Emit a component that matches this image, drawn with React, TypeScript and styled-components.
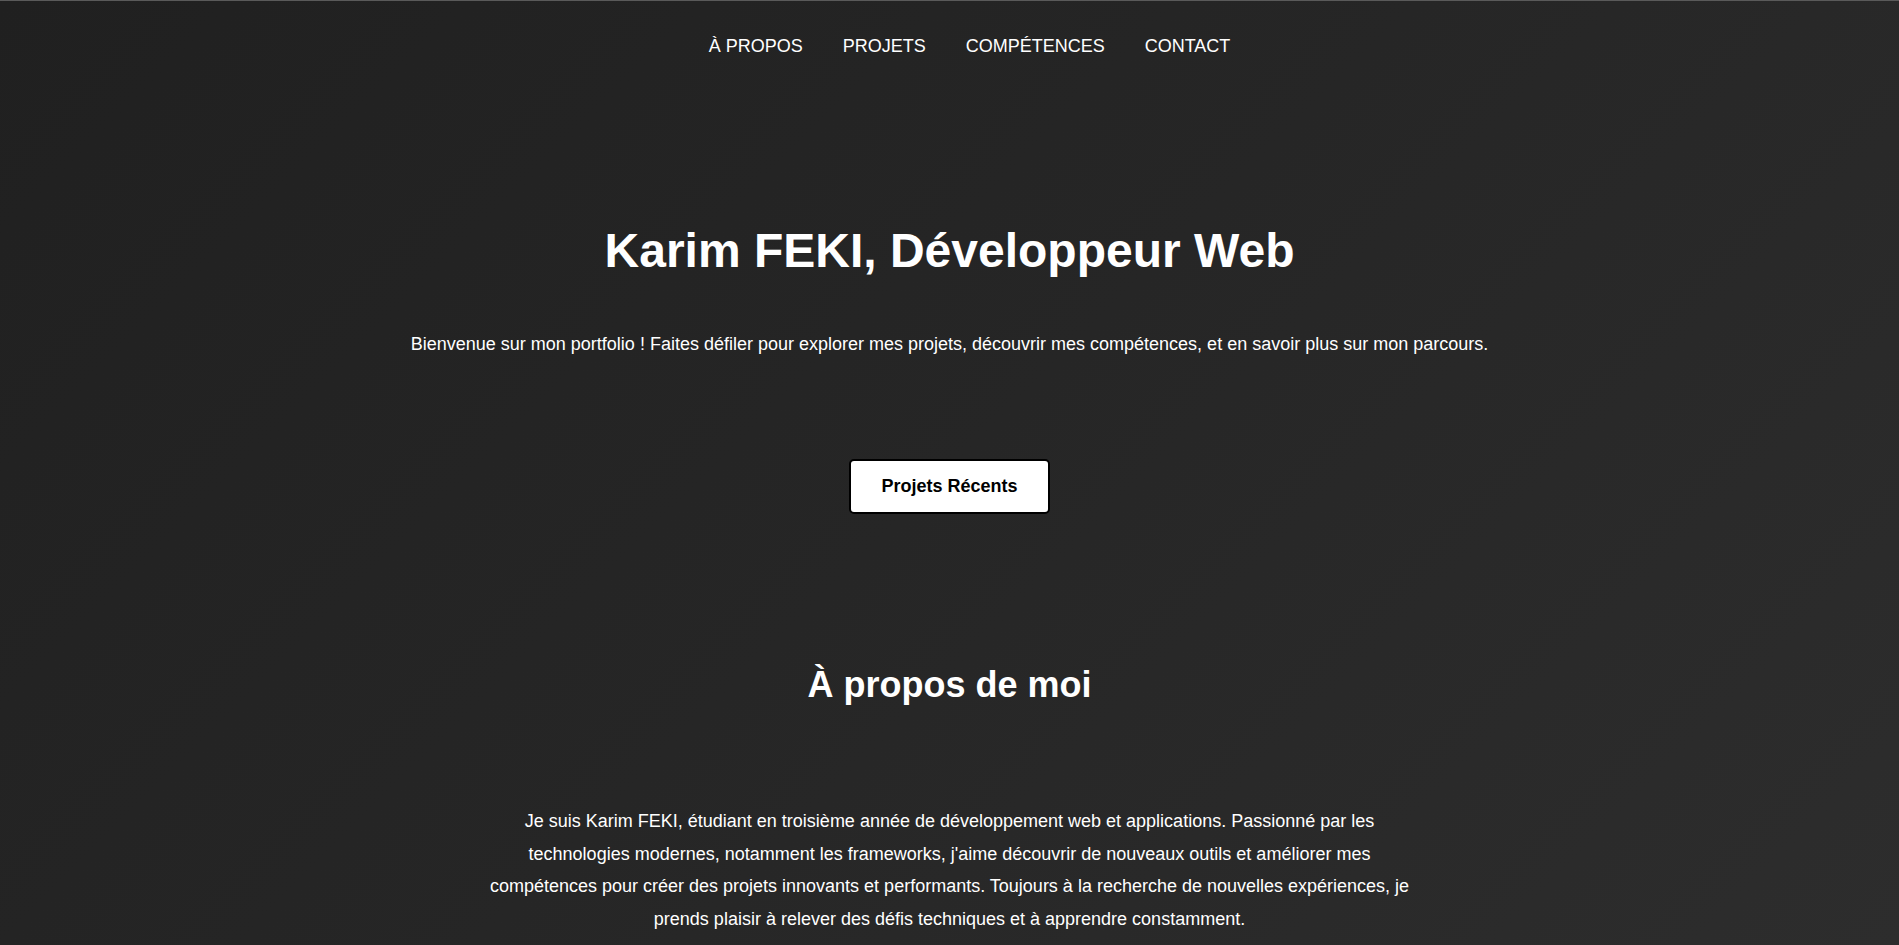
import React from "react";
import styled, { createGlobalStyle } from "styled-components";

const GlobalStyle = createGlobalStyle`
  html, body {
    margin: 0;
    padding: 0;
  }
  body {
    font-family: "Liberation Sans", Arial, sans-serif;
    color: #ffffff;
    background: linear-gradient(135deg, #202020 0%, #262626 50%, #2d2d2d 100%);
    min-height: 100vh;
  }
  * { box-sizing: border-box; }
`;

const Page = styled.div`
  min-height: 945px;
  border-top: 1px solid #5a5a5a;
  overflow: hidden;
`;

const Header = styled.header`
  display: flex;
  justify-content: center;
  padding-top: 35px;
`;

const Nav = styled.nav`
  display: flex;
  gap: 40px;
  padding-left: 40px;
`;

const NavLink = styled.a`
  color: #ffffff;
  text-decoration: none;
  font-size: 18px;
  text-transform: uppercase;
  line-height: normal;
`;

const Hero = styled.section`
  display: flex;
  flex-direction: column;
  align-items: center;
  text-align: center;
  padding-top: 166px;
`;

const Title = styled.h1`
  margin: 0;
  font-size: 48px;
  font-weight: 700;
  line-height: normal;
`;

const Subtitle = styled.p`
  margin: 56px 0 0;
  font-size: 18px;
  line-height: normal;
`;

const Button = styled.a`
  margin-top: 104px;
  display: inline-block;
  background: #ffffff;
  color: #000000;
  font-size: 18px;
  font-weight: 700;
  text-decoration: none;
  border: 2px solid #000000;
  border-radius: 5px;
  padding: 15px 30px;
  line-height: normal;
`;

const About = styled.section`
  display: flex;
  flex-direction: column;
  align-items: center;
  text-align: center;
  padding-top: 150px;
`;

const SectionTitle = styled.h2`
  margin: 0;
  font-size: 36px;
  font-weight: 700;
  line-height: normal;
`;

const Paragraph = styled.p`
  margin: 99px 0 0;
  max-width: 940px;
  font-size: 18px;
  line-height: 32.7px;
`;

export default function App() {
  return (
    <>
      <GlobalStyle />
      <Page>
        <Header>
          <Nav>
            <NavLink href="#about">À propos</NavLink>
            <NavLink href="#projects">Projets</NavLink>
            <NavLink href="#skills">Compétences</NavLink>
            <NavLink href="#contact">Contact</NavLink>
          </Nav>
        </Header>
        <Hero>
          <Title>Karim FEKI, Développeur Web</Title>
          <Subtitle>
            Bienvenue sur mon portfolio ! Faites défiler pour explorer mes projets, découvrir mes compétences, et en savoir plus sur mon parcours.
          </Subtitle>
          <Button href="#projects">Projets Récents</Button>
        </Hero>
        <About id="about">
          <SectionTitle>À propos de moi</SectionTitle>
          <Paragraph>
            Je suis Karim FEKI, étudiant en troisième année de développement web et applications. Passionné par les technologies modernes, notamment les frameworks, j'aime découvrir de nouveaux outils et améliorer mes compétences pour créer des projets innovants et performants. Toujours à la recherche de nouvelles expériences, je prends plaisir à relever des défis techniques et à apprendre constamment.
          </Paragraph>
        </About>
      </Page>
    </>
  );
}
